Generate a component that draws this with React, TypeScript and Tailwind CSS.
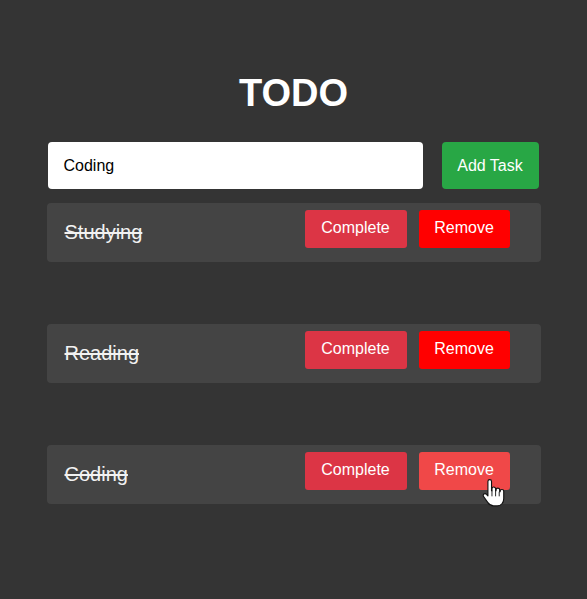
import React from "react";

const tasks = ["Studying", "Reading", "Coding"];

function HandCursor() {
  return (
    <svg
      width="26"
      height="31"
      viewBox="0 0 23 25"
      className="absolute left-[61px] top-[26px] pointer-events-none"
    >
      <path
        d="M7 1.8a1.6 1.6 0 0 1 3.2 0V10h.4V8.4a1.6 1.6 0 0 1 3.2 0V10h.4V9.4a1.6 1.6 0 0 1 3.2 0V11h.4v-.4a1.6 1.6 0 0 1 3.2 0V17c0 3.5-2.2 6.5-5.8 6.5H12c-2.6 0-3.8-1.1-5.2-3.1L3.2 15.2a1.6 1.6 0 0 1 2.5-2L7 14.6Z"
        fill="#ffffff"
        stroke="#111111"
        strokeWidth="1"
        strokeLinejoin="round"
      />
      <path d="M10.6 10v5M13.8 10v5M17 11v4" stroke="#111111" strokeWidth="0.8" />
    </svg>
  );
}

export default function App() {
  return (
    <div
      className="min-h-[599px] w-full bg-[#343434] pt-[74px]"
      style={{ fontFamily: '"Liberation Sans", Arial, sans-serif' }}
    >
      <h1 className="text-center text-[38px] leading-[38px] font-bold text-white">TODO</h1>
      <div className="mx-auto mt-[30px] w-[494px]">
        <div className="flex gap-[19px] pl-[1px]">
          <div className="flex h-[47px] w-[375px] items-center rounded-[4px] bg-white pl-[16px] text-[16px] text-black">
            Coding
          </div>
          <button className="h-[47px] w-[97px] rounded-[4px] bg-[#28a745] text-[16px] text-white">
            Add Task
          </button>
        </div>
        <div className="mt-[14px] flex flex-col gap-[62px]">
          {tasks.map((t, i) => (
            <div
              key={t}
              className="flex h-[59px] items-center justify-between rounded-[4px] bg-[#444444] pl-[18px] pr-[31px]"
            >
              <span className="mb-[2px] text-[20px] text-[#f2f2f2] line-through">{t}</span>
              <div className="mb-[7px] flex gap-[12px]">
                <button className="h-[38px] w-[102px] rounded-[3px] bg-[#dc3545] pb-[3px] text-[16px] text-white">
                  Complete
                </button>
                <div className="relative">
                  <button
                    className={
                      i === 2
                        ? "h-[38px] w-[91px] rounded-[3px] bg-[#f04848] pb-[3px] text-[16px] text-white"
                        : "h-[38px] w-[91px] rounded-[3px] bg-[#ff0000] pb-[3px] text-[16px] text-white"
                    }
                  >
                    Remove
                  </button>
                  {i === 2 && <HandCursor />}
                </div>
              </div>
            </div>
          ))}
        </div>
      </div>
    </div>
  );
}
